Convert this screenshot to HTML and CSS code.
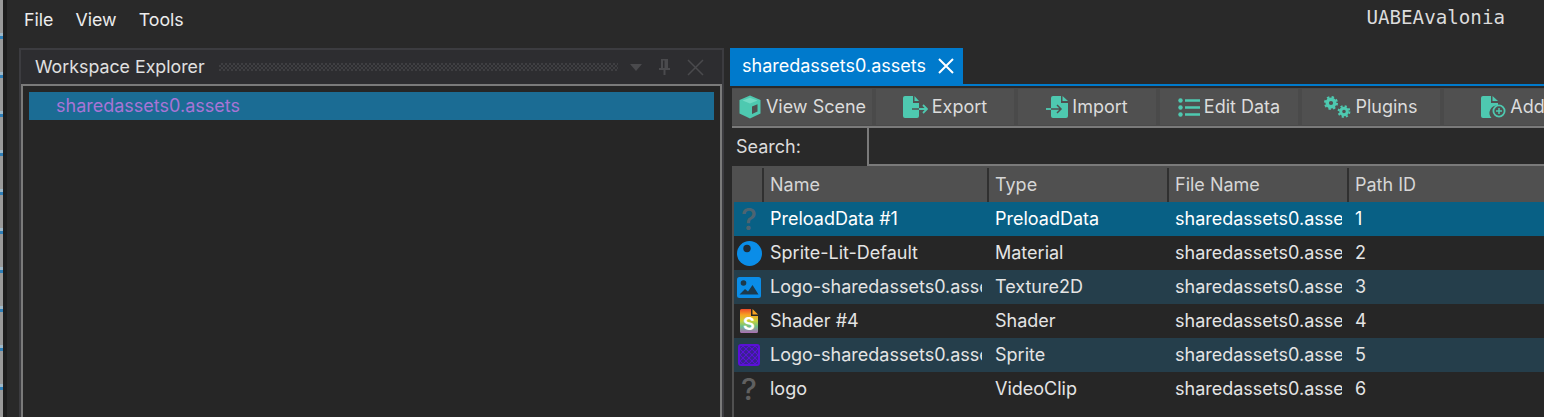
FILE: index.html

```html
<!DOCTYPE html>
<html lang="en">
<head>
  <meta charset="UTF-8">
  <title>UABEAvalonia</title>
  <meta name="viewport" content="width=device-width, initial-scale=1.0">
  <link rel="stylesheet" href="styles.css">
</head>
<body>

<div class="desktop-edge"></div>

<div class="app">
  <div class="menu-bar">
    <span class="menu-item">File</span>
    <span class="menu-item">View</span>
    <span class="menu-item">Tools</span>
    <span class="app-title">UABEAvalonia</span>
  </div>

  <div class="workspace">
    <section class="explorer">
      <div class="explorer-title">
        <span class="explorer-name">Workspace Explorer</span>
        <span class="grip"></span>
        <svg class="title-icon arrow" width="12" height="7" viewBox="0 0 12 7"><path d="M0 0h12L6 7z" fill="#4a4a4d"/></svg>
        <svg class="title-icon pin" width="11" height="16" viewBox="0 0 11 16"><path d="M2 0h7v9h2v2H6.500v5h-2v-5H0V9h2zM4 1.500V9h1.500V1.500z" fill="#4a4a4d"/></svg>
        <svg class="title-icon close" width="17" height="17" viewBox="0 0 17 17"><path d="M1 1l15 15M16 1L1 16" stroke="#4a4a4d" stroke-width="1.500" fill="none"/></svg>
      </div>
      <div class="tree">
        <div class="tree-row">sharedassets0.assets</div>
      </div>
    </section>

    <section class="document">
      <div class="tab-strip">
        <div class="tab">
          <span>sharedassets0.assets</span>
          <svg width="16" height="16" viewBox="0 0 16 16"><path d="M1 1l14 14M15 1L1 15" stroke="#fff" stroke-width="2" fill="none"/></svg>
        </div>
      </div>

      <div class="toolbar">
        <div class="tool">
          <svg width="24" height="24" viewBox="0 0 24 24"><path d="M12 0.500l10.500 4.500v13.500L12 23.500 1.500 18.500V5z" fill="#4ec9b0"/><path d="M4.500 5.500L12 2.800l7.500 2.700-7.500 3z" fill="#72dac4"/><path d="M14 11.500l5.500-2.200v7.200L14 19z" fill="#505050"/></svg>
          <span>View Scene</span>
        </div>
        <div class="tool">
          <svg width="25" height="22" viewBox="0 0 25 22"><path d="M0 2a2 2 0 0 1 2-2h8v7h6v13a2 2 0 0 1-2 2H2a2 2 0 0 1-2-2z" fill="#4ec9b0"/><path d="M11.500 0l4.500 5h-4.500z" fill="#4ec9b0"/><path d="M9 13h7" stroke="#505050" stroke-width="1.500"/><path d="M16 13h8M20 9l4 4-4 4" stroke="#4ec9b0" stroke-width="1.800" fill="none"/></svg>
          <span>Export</span>
        </div>
        <div class="tool">
          <svg width="22" height="22" viewBox="0 0 22 22"><path d="M5 2a2 2 0 0 1 2-2h8v7h7v13a2 2 0 0 1-2 2H7a2 2 0 0 1-2-2z" fill="#4ec9b0"/><path d="M16.500 0l5.500 5h-5.500z" fill="#4ec9b0"/><path d="M5 13h9M11 9l4 4-4 4" stroke="#505050" stroke-width="1.500" fill="none"/><path d="M0 13h5" stroke="#4ec9b0" stroke-width="1.800"/></svg>
          <span>Import</span>
        </div>
        <div class="tool">
          <svg width="22" height="19" viewBox="0 0 22 19"><circle cx="2.500" cy="2.500" r="2.200" fill="#4ec9b0"/><circle cx="2.500" cy="9.500" r="2.200" fill="#4ec9b0"/><circle cx="2.500" cy="16.500" r="2.200" fill="#4ec9b0"/><path d="M7 2.500h15M7 9.500h15M7 16.500h15" stroke="#4ec9b0" stroke-width="2.400"/></svg>
          <span>Edit Data</span>
        </div>
        <div class="tool">
          <svg width="27" height="22" viewBox="0 0 27 22"><circle cx="7" cy="7" r="3.800" fill="none" stroke="#4ec9b0" stroke-width="3.400"/><circle cx="7" cy="7" r="6" fill="none" stroke="#4ec9b0" stroke-width="2" stroke-dasharray="2.400 2.300"/><circle cx="20" cy="15.500" r="3.300" fill="none" stroke="#4ec9b0" stroke-width="3"/><circle cx="20" cy="15.500" r="5.400" fill="none" stroke="#4ec9b0" stroke-width="2" stroke-dasharray="2.100 2.150"/></svg>
          <span>Plugins</span>
        </div>
        <div class="tool">
          <svg width="25" height="22" viewBox="0 0 25 22"><path d="M0 2a2 2 0 0 1 2-2h8v7h7v2.500A7.500 7.500 0 0 0 10.500 22H2a2 2 0 0 1-2-2z" fill="#4ec9b0"/><path d="M11.500 0l5.500 5h-5.500z" fill="#4ec9b0"/><circle cx="18" cy="15" r="5.600" fill="none" stroke="#4ec9b0" stroke-width="1.800"/><path d="M15 15h6M18 12v6" stroke="#4ec9b0" stroke-width="1.500"/></svg>
          <span>Add</span>
        </div>
      </div>

      <div class="search-row">
        <label class="search-label" for="search">Search:</label>
        <input class="search-box" id="search" type="text">
      </div>

      <div class="grid">
        <div class="grid-head">
          <span class="head-cell"></span>
          <span class="head-cell">Name</span>
          <span class="head-cell">Type</span>
          <span class="head-cell">File Name</span>
          <span class="head-cell">Path ID</span>
        </div>

        <div class="grid-row selected">
          <span class="cell-icon question dim">?</span>
          <span class="cell">PreloadData #1</span>
          <span class="cell">PreloadData</span>
          <span class="cell">sharedassets0.assets</span>
          <span class="cell">1</span>
        </div>
        <div class="grid-row">
          <span class="cell-icon">
            <svg width="25" height="25" viewBox="0 0 25 25"><circle cx="12.500" cy="12.500" r="12.500" fill="#0a8de8"/><circle cx="10" cy="7.500" r="3.700" fill="#1f2c38"/></svg>
          </span>
          <span class="cell">Sprite-Lit-Default</span>
          <span class="cell">Material</span>
          <span class="cell">sharedassets0.assets</span>
          <span class="cell">2</span>
        </div>
        <div class="grid-row alt">
          <span class="cell-icon">
            <svg width="24" height="21" viewBox="0 0 24 21"><rect width="24" height="21" rx="2.500" fill="#0a8de8"/><circle cx="6.500" cy="6" r="2.800" fill="#1c3a4c"/><path d="M2.500 17.500l5.500-5.500 3 2.500 4.500-6.500 6 9.500z" fill="#1c3a4c"/></svg>
          </span>
          <span class="cell">Logo-sharedassets0.assets</span>
          <span class="cell">Texture2D</span>
          <span class="cell">sharedassets0.assets</span>
          <span class="cell">3</span>
        </div>
        <div class="grid-row">
          <span class="cell-icon">
            <svg width="18" height="24" viewBox="0 0 18 24">
              <defs>
                <linearGradient id="rainbow" x1="0" y1="0" x2="0" y2="1">
                  <stop offset="0" stop-color="#ee4a2a"/>
                  <stop offset="0.250" stop-color="#f7a322"/>
                  <stop offset="0.500" stop-color="#c6d23c"/>
                  <stop offset="0.720" stop-color="#6cbf86"/>
                  <stop offset="1" stop-color="#ab6cb4"/>
                </linearGradient>
              </defs>
              <path d="M1.500 0h9.500v7h7v15.500a1.500 1.500 0 0 1-1.500 1.500h-15A1.500 1.500 0 0 1 0 22.500v-21A1.500 1.500 0 0 1 1.500 0z" fill="url(#rainbow)"/>
              <path d="M12.500 0l5.500 5.500h-5.500z" fill="#f7a322"/>
              <text x="9" y="21" class="shader-letter">S</text>
            </svg>
          </span>
          <span class="cell">Shader #4</span>
          <span class="cell">Shader</span>
          <span class="cell">sharedassets0.assets</span>
          <span class="cell">4</span>
        </div>
        <div class="grid-row alt">
          <span class="cell-icon">
            <span class="sprite-icon"></span>
          </span>
          <span class="cell">Logo-sharedassets0.assets</span>
          <span class="cell">Sprite</span>
          <span class="cell">sharedassets0.assets</span>
          <span class="cell">5</span>
        </div>
        <div class="grid-row">
          <span class="cell-icon question">?</span>
          <span class="cell">logo</span>
          <span class="cell">VideoClip</span>
          <span class="cell">sharedassets0.assets</span>
          <span class="cell">6</span>
        </div>
      </div>
    </section>
  </div>
</div>

</body>
</html>
```

FILE: styles.css

```css
html, body {
  height: 100%;
}
body {
  display: flex;
  margin: 0;
  overflow: hidden;
  background: #292929;
  color: #e4e4e4;
  font-family: Inter, "Noto Sans", sans-serif;
  font-size: 18px;
}
.desktop-edge {
  flex: none;
  width: 3px;
  background: repeating-linear-gradient(#9a9a9a 0 33px, #9fb8c8 33px 36px, #2f7fb8 36px 39px);
  border-right: 4px solid #1d1d1d;
}
.app {
  flex: 1;
  min-width: 0;
  display: flex;
  flex-direction: column;
}

/* menu */
.menu-bar {
  flex: none;
  height: 40px;
  display: flex;
  align-items: center;
  padding-left: 17px;
  gap: 22px;
}
.menu-item {
  color: #ececec;
  font-size: 17.800px;
  padding-bottom: 2px;
}
.app-title {
  margin-left: auto;
  margin-right: 39px;
  margin-top: -5px;
  font-family: "DejaVu Sans Mono", monospace;
  font-size: 19.200px;
  color: #dcdcdc;
}

.workspace {
  flex: 1;
  min-height: 0;
  display: flex;
  padding-top: 8px;
  padding-left: 12px;
  gap: 6px;
}

/* left pane */
.explorer {
  flex: none;
  width: 705px;
  display: flex;
  flex-direction: column;
  box-sizing: border-box;
  border: 2px solid #3c3c40;
  border-bottom: none;
  background: #2d2d30;
}
.explorer-title {
  flex: none;
  height: 34px;
  display: flex;
  align-items: center;
  padding-left: 14px;
  color: #e0e0e0;
}
.explorer-name {
  font-size: 17.800px;
  padding-bottom: 2px;
}
.grip {
  width: 399px;
  height: 8px;
  margin-left: 14px;
  background-image: conic-gradient(#3f3f42 25%, transparent 0 50%, #3f3f42 0 75%, transparent 0);
  background-size: 4px 4px;
}
.title-icon {
  flex: none;
}
.arrow {
  margin-left: 12px;
}
.pin {
  margin-left: 17px;
}
.close {
  margin-left: 17px;
}
.tree {
  flex: 1;
  box-sizing: border-box;
  border: 2px solid #7a7a7a;
  border-bottom: none;
  background: #262626;
  padding: 6px 6px 0;
}
.tree-row {
  height: 28px;
  line-height: 28px;
  background: #1b6c94;
  color: #a874d6;
  padding-left: 27px;
}

/* right pane */
.document {
  flex: 1;
  min-width: 0;
  display: flex;
  flex-direction: column;
}
.tab-strip {
  flex: none;
  height: 36px;
  border-bottom: 2px solid #007acc;
  display: flex;
}
.tab {
  width: 233px;
  box-sizing: border-box;
  background: #007acc;
  color: #fff;
  display: flex;
  align-items: center;
  gap: 12px;
  padding-left: 12px;
}
.tab span {
  padding-bottom: 2px;
}
.toolbar {
  flex: none;
  height: 38px;
  margin: 2px 0 0 2px;
  background: #4a4a4a;
  display: flex;
  gap: 4px;
  border-bottom: 2px solid #7a7a7a;
  overflow: hidden;
}
.tool {
  flex: none;
  width: 138px;
  height: 36px;
  margin-top: 1px;
  background: #505050;
  display: flex;
  align-items: center;
  justify-content: center;
  gap: 4px;
  color: #dcdcdc;
}
.tool span {
  padding-bottom: 2px;
}
.tool:first-child {
  width: 140px;
}
.search-row {
  flex: none;
  height: 38px;
  display: flex;
  align-items: center;
  margin-left: 2px;
  background: #292929;
}
.search-label {
  flex: none;
  width: 135px;
  box-sizing: border-box;
  padding: 0 0 2px 4px;
  color: #dcdcdc;
}
.search-box {
  flex: 1;
  min-width: 0;
  height: 38px;
  box-sizing: border-box;
  background: #292929;
  border: 2px solid #7a7a7a;
  border-right: none;
  border-top: none;
  outline: none;
}

/* data grid */
.grid {
  flex: 1;
  margin-left: 2px;
  border-left: 2px solid #505050;
  background: #262626;
  --grid-cols: 28px 225px 180px 180px 1fr;
}
.grid-head {
  height: 36px;
  display: grid;
  grid-template-columns: var(--grid-cols);
  background: #505050;
  margin-left: -2px;
  padding-left: 2px;
}
.head-cell {
  display: flex;
  align-items: center;
  padding: 0 0 2px 6px;
  color: #d6d6d6;
  border-left: 2px solid #303030;
  margin-top: 2px;
}
.head-cell:first-child {
  border-left: none;
}
.grid-row {
  height: 34px;
  display: grid;
  grid-template-columns: var(--grid-cols);
  align-items: center;
}
.grid-row.selected {
  background: #086085;
  color: #fff;
}
.grid-row.alt {
  background: #253e4b;
}
.cell {
  min-width: 0;
  overflow: hidden;
  white-space: nowrap;
  padding: 0 0 2px 8px;
  margin-right: 5px;
}
.cell-icon {
  display: flex;
  align-items: center;
  justify-content: center;
  height: 34px;
  margin-left: 2px;
}
.question {
  font-size: 30px;
  font-weight: 500;
  color: #606060;
}
.question.dim {
  color: #4d6470;
}
.shader-letter {
  font-family: Inter, sans-serif;
  font-size: 18px;
  font-weight: 700;
  fill: #fff;
  text-anchor: middle;
}
.sprite-icon {
  width: 22px;
  height: 22px;
  box-sizing: border-box;
  border: 2px solid #5a10d8;
  border-radius: 3px;
  background-color: #5a10d8;
  background-image:
    radial-gradient(circle, #3a2090 1.500px, transparent 2px),
    radial-gradient(circle, #3a2090 1.500px, transparent 2px);
  background-size: 6px 6px;
  background-position: 0 0, 3px 3px;
}
```
